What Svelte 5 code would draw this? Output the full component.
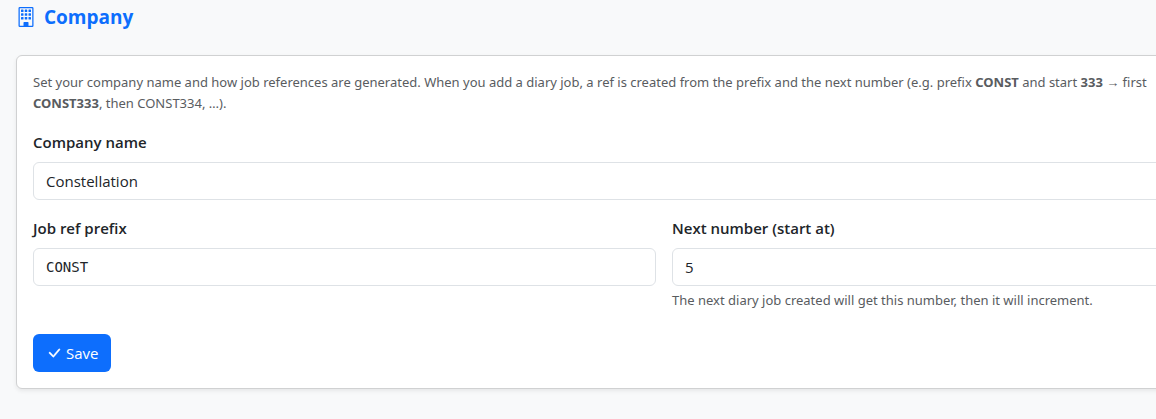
<script lang="ts">
  let company = $state('Constellation');
  let prefix = $state('CONST');
  let nextNumber = $state('5');

  const rows = [2, 5, 8];
  const cols = [4, 7, 10];

  function save(event: SubmitEvent) {
    event.preventDefault();
  }
</script>

<main class="page">
  <h1 class="title">
    <svg width="20" height="20" viewBox="0 0 16 16" fill="currentColor" aria-hidden="true">
      {#each rows as y}
        {#each cols as x}
          <rect {x} {y} width="2" height="2" rx="0.4" />
        {/each}
      {/each}
      <path d="M2 1a1 1 0 0 1 1-1h10a1 1 0 0 1 1 1v14a1 1 0 0 1-1 1H3a1 1 0 0 1-1-1zm11 0H3v14h3v-2.5a.5.5 0 0 1 .5-.5h3a.5.5 0 0 1 .5.5V15h3z" />
    </svg>
    Company
  </h1>

  <form class="card" onsubmit={save}>
    <p class="intro">
      Set your company name and how job references are generated. When you add a diary job, a ref is created from the prefix and the next number (e.g. prefix <strong>CONST</strong> and start <strong>333</strong> → first<br />
      <strong>CONST333</strong>, then CONST334, …).
    </p>

    <div class="field">
      <label for="company">Company name</label>
      <input id="company" type="text" bind:value={company} />
    </div>

    <div class="row">
      <div class="field">
        <label for="prefix">Job ref prefix</label>
        <input id="prefix" class="mono" type="text" bind:value={prefix} />
      </div>
      <div class="field">
        <label for="next">Next number (start at)</label>
        <input id="next" type="text" inputmode="numeric" aria-describedby="next-help" bind:value={nextNumber} />
        <div id="next-help" class="help">The next diary job created will get this number, then it will increment.</div>
      </div>
    </div>

    <button class="save" type="submit">
      <svg width="16" height="16" viewBox="0 0 16 16" fill="currentColor" stroke="currentColor" stroke-width="0.4" aria-hidden="true">
        <path d="M12.736 3.97a.733.733 0 0 1 1.047 0c.286.289.29.756.01 1.05L7.88 12.01a.733.733 0 0 1-1.065.02L3.217 8.384a.757.757 0 0 1 0-1.06.733.733 0 0 1 1.047 0l3.052 3.093 5.4-6.425z" />
      </svg>
      Save
    </button>
  </form>
</main>

<style>
  :global(body) {
    margin: 0;
    background: #f8f9fa;
    overflow: hidden;
  }

  /* the page runs wider than the window */
  .page {
    box-sizing: border-box;
    width: calc(100% + 172px);
    padding: 4px 16px 30px;
    color: #212529;
    font-family: 'Segoe UI', 'Open Sans', 'Noto Sans', sans-serif;
    font-size: 15px;
    line-height: 24px;
  }

  .title {
    display: flex;
    align-items: center;
    gap: 8px;
    margin: 0 0 25px;
    color: #0d6efd;
    font-size: 19px;
    font-weight: 700;
    line-height: 26px;
  }

  .card {
    padding: 16px;
    background: #fff;
    border: 1px solid #d0d1d2;
    border-radius: 6px;
    box-shadow: 0 2px 4px rgba(0, 0, 0, 0.075);
  }

  .intro {
    margin: 0 0 16px;
    color: #595c5f;
    font-family: 'Segoe UI', 'Noto Sans', sans-serif;
    font-size: 13px;
    line-height: 21px;
  }

  .row {
    display: grid;
    grid-template-columns: 1fr 1fr;
    gap: 16px;
    margin: 16px 0 24px;
  }

  label {
    display: block;
    margin-bottom: 8px;
    font-weight: 600;
  }

  input {
    display: block;
    box-sizing: border-box;
    width: 100%;
    height: 38px;
    padding: 6px 12px;
    color: #212529;
    background: #fff;
    border: 1px solid #dee2e6;
    border-radius: 6px;
    font: inherit;
  }

  .mono {
    font-family: 'DejaVu Sans Mono', monospace;
    font-size: 14px;
  }

  .help {
    margin-top: 4px;
    color: #595c5f;
    font-family: 'Segoe UI', 'Noto Sans', sans-serif;
    font-size: 13px;
    line-height: 20px;
  }

  .save {
    display: flex;
    align-items: center;
    gap: 4px;
    height: 38px;
    padding: 0 13px;
    color: #fff;
    background: #0d6efd;
    border: 0;
    border-radius: 6px;
    font: inherit;
    cursor: pointer;
  }
</style>
